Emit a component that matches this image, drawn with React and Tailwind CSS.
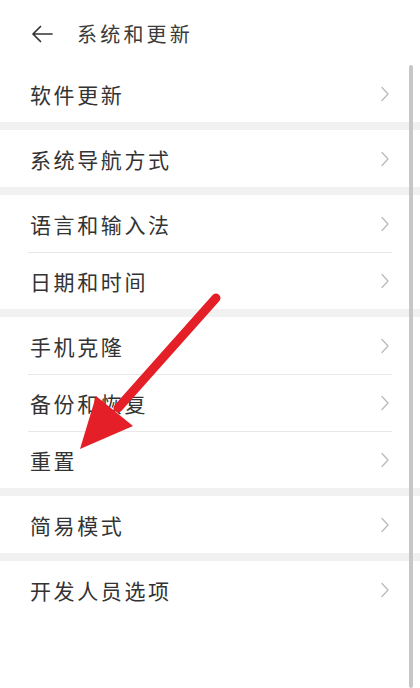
import React from 'react';

const sections = [
  ['软件更新'],
  ['系统导航方式'],
  ['语言和输入法', '日期和时间'],
  ['手机克隆', '备份和恢复', '重置'],
  ['简易模式'],
  ['开发人员选项'],
];

const Chevron = () => (
  <svg width="10" height="16" viewBox="0 0 10 16" className="shrink-0">
    <path d="M2 1.5 L8 8 L2 14.5" fill="none" stroke="#bbbbbb" strokeWidth="1.3" strokeLinecap="round" strokeLinejoin="round" />
  </svg>
);

const Row = ({ label, divider }) => (
  <div className="relative flex h-[57px] items-center justify-between pl-[30px] pr-[30px] pt-[1px] bg-white">
    {divider && <div className="absolute left-[28px] right-[28px] top-0 h-px bg-[#e8e8e8]" />}
    <span className="text-[21px] leading-none tracking-[2.6px] text-[#333]">{label}</span>
    <Chevron />
  </div>
);

export default function App() {
  return (
    <div
      className="relative h-[688px] w-[420px] overflow-hidden bg-white"
      style={{ fontFamily: '"Noto Sans CJK SC", "Noto Sans", sans-serif' }}
    >
      {/* header */}
      <div className="flex h-[65px] items-center pl-[30px] pt-[3px]">
        <svg width="24" height="20" viewBox="0 0 24 20" className="shrink-0">
          <path d="M22 10 H3 M10.5 2.5 L3 10 L10.5 17.5" fill="none" stroke="#333" strokeWidth="1.7" strokeLinecap="round" strokeLinejoin="round" />
        </svg>
        <span className="ml-[23px] text-[20px] leading-none tracking-[3.2px] text-[#3a3a3a]">系统和更新</span>
      </div>

      {sections.map((items, si) => (
        <div key={si} className={si > 0 ? 'border-t-8 border-[#f1f1f1]' : ''}>
          {items.map((label, i) => (
            <Row key={label} label={label} divider={i > 0} />
          ))}
        </div>
      ))}

      {/* scrollbar */}
      <div className="absolute right-[7px] top-[65px] bottom-0 w-[4px] rounded-full bg-[#c6c6c6]" />

      {/* red annotation arrow */}
      <svg className="absolute left-0 top-0" width="420" height="688" viewBox="0 0 420 688">
        <line x1="216" y1="298" x2="118" y2="408" stroke="#e51f27" strokeWidth="9" strokeLinecap="round" />
        <polygon points="80,449 96,396 133,426" fill="#e51f27" />
      </svg>
    </div>
  );
}
